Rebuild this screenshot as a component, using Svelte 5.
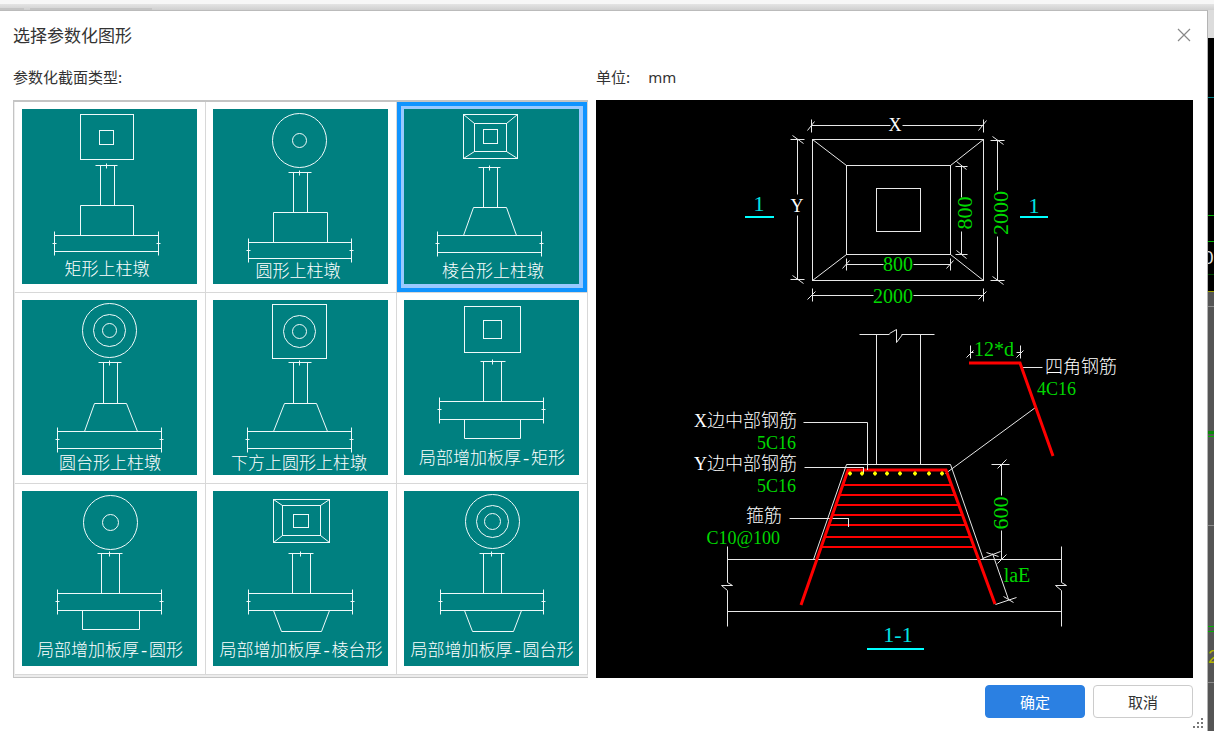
<script>
	// Every thumbnail shares the same parts: plan view on top, column, slab, and a pad above or below the slab
	const shapes = [
		{
			name: '矩形上柱墩',
			rects: [[58, 5, 53, 45], [77, 21, 14, 14]],
			column: { cap: [73, 95], sides: [78, 92], top: 56, bottom: 96 },
			pad: '58,126 58,96 111,96 111,126',
			slab: { left: 32, right: 136, top: 126, bottom: 142 },
			label: [85, 166]
		},
		{
			name: '圆形上柱墩',
			circles: [[86, 31, 27], [86, 31, 7]],
			column: { cap: [75, 98], sides: [80, 94], top: 63, bottom: 103 },
			pad: '60,133 60,103 114,103 114,133',
			slab: { left: 35, right: 138, top: 133, bottom: 149 },
			label: [85, 168]
		},
		{
			name: '棱台形上柱墩',
			rects: [[59, 5, 54, 44], [70, 14, 32, 28], [79, 20, 14, 14]],
			corners: true,
			column: { cap: [74, 96], sides: [79, 93], top: 58, bottom: 98 },
			pad: '59,126 69,98 102,98 112,126',
			slab: { left: 33, right: 137, top: 126, bottom: 143 },
			label: [89, 168]
		},
		{
			name: '圆台形上柱墩',
			circles: [[87, 30, 27], [87, 30, 16], [87, 30, 7]],
			column: { cap: [76, 99], sides: [81, 95], top: 62, bottom: 103 },
			pad: '62,131 72,103 104,103 115,131',
			slab: { left: 35, right: 139, top: 131, bottom: 148 },
			label: [88, 169]
		},
		{
			name: '下方上圆形上柱墩',
			rects: [[59, 4, 54, 54]],
			circles: [[86, 31, 16], [86, 31, 7]],
			column: { cap: [75, 98], sides: [80, 94], top: 62, bottom: 103 },
			pad: '60,131 71,103 103,103 114,131',
			slab: { left: 34, right: 138, top: 131, bottom: 148 },
			label: [86, 169]
		},
		{
			name: '局部增加板厚-矩形',
			rects: [[60, 6, 56, 46], [79, 20, 18, 18]],
			column: { cap: [76, 101], sides: [79, 97], top: 61, bottom: 101 },
			pad: '60,119 60,138 116,138 116,119',
			slab: { left: 35, right: 139, top: 101, bottom: 119 },
			label: [88, 164]
		},
		{
			name: '局部增加板厚-圆形',
			circles: [[88, 31, 27], [88, 31, 8]],
			column: { cap: [75, 100], sides: [79, 97], top: 62, bottom: 102 },
			pad: '60,119 60,138 117,138 117,119',
			slab: { left: 35, right: 139, top: 102, bottom: 119 },
			label: [88, 165]
		},
		{
			name: '局部增加板厚-棱台形',
			rects: [[60, 8, 56, 43], [69, 14, 38, 30], [80, 23, 15, 13]],
			corners: true,
			column: { cap: [75, 100], sides: [79, 97], top: 62, bottom: 102 },
			pad: '60,119 68,140 108,140 116,119',
			slab: { left: 35, right: 139, top: 102, bottom: 119 },
			label: [88, 165]
		},
		{
			name: '局部增加板厚-圆台形',
			circles: [[88, 30, 27], [88, 30, 16], [88, 30, 8]],
			column: { cap: [75, 100], sides: [79, 97], top: 62, bottom: 102 },
			pad: '60,119 68,140 109,140 117,119',
			slab: { left: 36, right: 139, top: 102, bottom: 119 },
			label: [88, 165]
		}
	];

	let selected = $state(2);

	const stirrups = [485, 495, 505, 515, 525, 537, 547];
	const dots = [850, 862, 875, 887, 900, 915, 929, 942];

	const barLeft = (y) => 848 - (y - 470) * 0.345;
	const barRight = (y) => 946 + (y - 470) * 0.367;

	function cornerPath([a, b]) {
		const [x, y, w, h] = a;
		const [u, v, p, q] = b;
		return `M${x} ${y}L${u} ${v}M${x + w} ${y}L${u + p} ${v}M${x} ${y + h}L${u} ${v + q}M${x + w} ${y + h}L${u + p} ${v + q}`;
	}
</script>

<svelte:head>
	<title>选择参数化图形</title>
</svelte:head>

<div class="page">
	<div class="toolbar"><span></span><span></span></div>

	<div class="workspace">
		<div class="dialog" role="dialog" aria-labelledby="dialog-title">
			<header>
				<h1 id="dialog-title">选择参数化图形</h1>
				<button class="close" aria-label="关闭">
					<svg width="14" height="14" viewBox="0 0 14 14"><path d="M1 1L13 13M13 1L1 13" /></svg>
				</button>
			</header>

			<div class="content">
				<section class="types">
					<h2>参数化截面类型:</h2>
					<ul class="list">
						{#each shapes as s, i}
							<li>
								<button
									class="thumb"
									class:selected={selected === i}
									aria-pressed={selected === i}
									onclick={() => (selected = i)}
								>
									<svg viewBox="0 0 175 175">
										<g class="lines" transform="translate(.5 .5)">
											{#each s.rects ?? [] as [x, y, w, h]}
												<rect {x} {y} width={w} height={h} />
											{/each}
											{#each s.circles ?? [] as [cx, cy, r]}
												<circle {cx} {cy} {r} />
											{/each}
											{#if s.corners}<path d={cornerPath(s.rects)} />{/if}
											<path
												d="M{s.column.cap[0]} {s.column.top}H{s.column.cap[1]}M{s.column
													.sides[0]} {s.column.top}V{s.column.bottom}M{s.column.sides[1]} {s
													.column.top}V{s.column.bottom}M{(s.column.cap[0] + s.column.cap[1]) >>
													1} {s.column.top - 2}v5"
											/>
											<polyline points={s.pad} />
											<path
												d="M{s.slab.left} {s.slab.top}H{s.slab.right}M{s.slab.left} {s.slab
													.bottom}H{s.slab.right}M{s.slab.left} {s.slab.top - 4}V{s.slab.bottom +
													4}M{s.slab.right} {s.slab.top - 4}V{s.slab.bottom + 4}M{s.slab.left -
													2} {s.slab.top + 8}h4M{s.slab.right - 2} {s.slab.top + 8}h4"
											/>
										</g>
										<text x={s.label[0]} y={s.label[1]}>{s.name}</text>
									</svg>
								</button>
							</li>
						{/each}
					</ul>
				</section>

				<section class="detail">
					<h2>单位:<span>mm</span></h2>
					<svg class="preview" viewBox="596 100 597 578">
						<!-- plan view -->
						<g class="lines" transform="translate(.5 .5)">
							<rect x="812" y="139" width="171" height="141" />
							<rect x="846" y="165" width="104" height="89" />
							<rect x="876" y="188" width="44" height="43" />
							<path d="M812 139L846 165M983 139L950 165M812 280L846 254M983 280L950 254" />
							<path d="M811 125H890M902 125H983M811 119V132M983 119V132" />
							<path d="M797 139V194M797 215V279M790 139H804M790 279H804" />
							<path d="M961 166V197M961 231V254M955 166H967M955 254H967" />
							<path d="M997 140V190M997 236V280M990 140H1004M990 280H1004" />
							<path d="M846 264H883M913 264H950M846 258V270M950 258V270" />
							<path d="M812 295H873M913 295H983M812 288V301M983 288V301" />
							<path
								d="M807 130L814 121M978 130L986 120M792 135L803 143M792 275L803 283M956 161L966 169M956 250L966 258M992 136L1003 144M992 276L1003 284M842 268L849 260M946 268L953 260M807 299L815 291M978 299L986 291"
							/>
						</g>
						<text class="mark" x="895" y="131">X</text>
						<text class="mark" x="797" y="212">Y</text>
						<text class="dim" x="898" y="271">800</text>
						<text class="dim" x="893" y="303">2000</text>
						<text class="dim tall" transform="translate(972 213) rotate(-90)">800</text>
						<text class="dim tall" transform="translate(1008 213) rotate(-90)">2000</text>
						<g class="section">
							<text x="759" y="211">1</text>
							<text x="1034" y="213">1</text>
							<text x="898" y="642">1-1</text>
							<path d="M745 217H774M1020 217H1048M867 649H924" />
						</g>

						<!-- section 1-1 -->
						<g class="lines" transform="translate(.5 .5)">
							<path d="M859 334H889M901 334H934M876 334V464M920 334V464M846 464H950" />
							<path d="M889 333L896 329V342L902 334" />
							<path d="M846 464L813 559M950 464L983 559" />
							<path
								d="M727 559H1061M727 611H1061M727 546V582M727 590V626M1061 546V582M1061 590V626"
							/>
							<path d="M727 582L732 585H721L727 590M1061 582L1066 585H1055L1061 590" />
							<path d="M803 422H867V469M804 467H863V473M789 518H848V526M1021 367H1042" />
							<path d="M1035 407L945 473" />
							<path
								d="M1001 464V495M1001 530V559M991 464H1009M970 345V358M1020 345V358M970 352H973M1016 352H1020"
							/>
							<path
								d="M997 468L1006 459M997 563L1006 554M966 357L973 350M1016 357L1023 350M982 558L1000 551M995 604L1016 597M992 553L1008 599M986 552L998 556M1003 596L1013 602"
							/>
						</g>
						<g class="rebar">
							<path d="M801 605L848 470H946L995 604M969 363H1020L1053 456" />
							{#each stirrups as y}
								<path class="flat" d="M{barLeft(y)} {y}H{barRight(y)}" />
							{/each}
						</g>
						<path class="lines" d="M867.5 464V470M863.5 467V474M848.5 518V527" />
						{#each dots as x}
							<path class="dot" d="M{x - 2} 473.5h4M{x} 471.5v4" />
						{/each}
						<text class="note end" x="797" y="427">X边中部钢筋</text>
						<text class="value end" x="796" y="449">5C16</text>
						<text class="note end" x="797" y="470">Y边中部钢筋</text>
						<text class="value end" x="796" y="492">5C16</text>
						<text class="note end" x="782" y="522">箍筋</text>
						<text class="value end" x="780" y="544">C10@100</text>
						<text class="dim" x="994" y="356">12*d</text>
						<text class="note" x="1045" y="373">四角钢筋</text>
						<text class="value" x="1037" y="395">4C16</text>
						<text class="dim tall" transform="translate(1008 513) rotate(-90)">600</text>
						<text class="dim" x="1017" y="582">laE</text>
					</svg>
				</section>
			</div>

			<footer>
				<button class="btn primary">确定</button>
				<button class="btn">取消</button>
				<svg class="grip" width="11" height="11" viewBox="0 0 11 11">
					<path d="M8 0h2v2h-2zM4 4h2v2h-2zM8 4h2v2h-2zM0 8h2v2h-2zM4 8h2v2h-2zM8 8h2v2h-2z" />
				</svg>
			</footer>
		</div>

		<!-- edge of the drawing area behind the dialog -->
		<svg class="canvas" width="6" height="721" viewBox="0 -1 6 721">
			<rect class="bar" y="-1" width="6" height="28" />
			<rect class="night" y="27" width="6" height="253" />
			<rect class="floor" y="280" width="6" height="440" />
			<path stroke="#007f86" d="M0 86.500h6" />
			<path stroke="#00b400" d="M0 204.500h6M0 230.500h6M0 615.500h6M0 620.500h6M0 425.500h6" />
			<path stroke="#0a8a0a" stroke-width="3" d="M0 421.500h6" />
			<path stroke="#004800" d="M0 263.500h6" />
			<path stroke="#a0a000" d="M0 280.500h6" />
			<path stroke="#8c8c8c" d="M0 295.500h6M0 514.500h6M0 671.500h6" />
			<text x="-5" y="253" fill="#ddd">0</text>
			<text x="0" y="652" fill="#b4b400">2</text>
		</svg>
	</div>
</div>

<style>
	:global(body) {
		background: #d6d6d6;
	}

	.page {
		min-height: 100vh;
		display: flex;
		flex-direction: column;
		font-family: 'Noto Sans CJK SC', sans-serif;
		color: #333;
		overflow: hidden;
	}

	.toolbar {
		height: 10px;
		box-sizing: border-box;
		border-top: 4px solid #f7f7f7;
		background: linear-gradient(#e4e4e4, #cfcfcf);
		display: flex;
		align-items: flex-end;
		gap: 6px;
	}

	.toolbar span {
		width: 24px;
		height: 2px;
		background: #c4c4c4;
	}

	.toolbar span + span {
		width: 122px;
	}

	.workspace {
		flex: 1;
		display: grid;
		grid-template-columns: 1fr 6px;
	}

	.dialog {
		background: #fff;
		border-top: 1px solid #bbb;
		border-right: 1px solid #b4b4b4;
		display: flex;
		flex-direction: column;
	}

	header {
		height: 48px;
		padding: 0 16px 0 13px;
		display: flex;
		align-items: center;
		justify-content: space-between;
	}

	h1 {
		margin: 0;
		font-size: 17px;
		line-height: 24px;
		font-weight: 400;
	}

	button {
		font-family: inherit;
		cursor: pointer;
	}

	.close {
		border: 0;
		background: none;
		padding: 0;
		display: flex;
	}

	.close path {
		stroke: #888;
		stroke-width: 1.2;
		fill: none;
	}

	.content {
		display: grid;
		grid-template-columns: 575px 1fr;
		gap: 8px;
		padding: 0 14px 0 13px;
	}

	h2 {
		margin: 0;
		height: 41px;
		font-size: 15px;
		line-height: 36px;
		font-weight: 400;
	}

	h2 span {
		margin-left: 18px;
		font-family: 'Noto Sans', sans-serif;
		font-size: 15px;
	}

	.list {
		list-style: none;
		margin: 0;
		padding: 0 0 2px 1px;
		display: grid;
		grid-template-columns: repeat(3, 191px);
		border: 1px solid #c4c4c4;
		border-top-width: 2px;
		border-right: 0;
		background: #ececec;
	}

	.list li {
		background: #fff;
		border-right: 1px solid #d8d8d8;
		border-bottom: 1px solid #d8d8d8;
	}

	.thumb {
		display: block;
		width: 190px;
		height: 190px;
		box-sizing: border-box;
		border: 4px solid #fff;
		padding: 3px 4px 4px 3px;
		background: #fff;
		border-radius: 0;
	}

	.thumb.selected {
		border-color: #1094ff;
		background: #99c9ff;
	}

	.thumb svg {
		display: block;
		width: 175px;
		height: 175px;
		background: #008080;
	}

	.thumb text {
		font-family: 'Liberation Mono', 'Noto Sans CJK SC', sans-serif;
		font-size: 17px;
		font-weight: 300;
		fill: #fff;
		text-anchor: middle;
	}

	.lines {
		fill: none;
		stroke: #f0fafa;
		stroke-width: 1;
	}

	.preview {
		display: block;
		width: 100%;
		height: 578px;
		background: #000;
		font-family: 'Liberation Serif', 'Noto Sans CJK SC', serif;
		font-weight: 300;
	}

	.preview .lines {
		stroke: #e8e8e8;
	}

	.mark,
	.note {
		fill: #fff;
		font-size: 18px;
	}

	.mark,
	.dim {
		text-anchor: middle;
	}

	.dim,
	.value {
		fill: #00d800;
		font-size: 20px;
	}

	.value {
		font-size: 18px;
	}

	.tall {
		font-size: 22px;
	}

	.end {
		text-anchor: end;
	}

	.section {
		fill: #00e5e5;
		font-size: 22px;
		text-anchor: middle;
	}

	.section path {
		stroke: #0ff;
		stroke-width: 2;
	}

	.rebar path {
		fill: none;
		stroke: #f00;
		stroke-width: 3;
	}

	.rebar .flat {
		stroke-width: 2;
	}

	.dot {
		stroke: #ff0;
		stroke-width: 2;
	}

	footer {
		display: flex;
		gap: 8px;
		justify-content: flex-end;
		padding: 7px 14px 0 13px;
		position: relative;
		flex: 1;
	}

	.btn {
		width: 100px;
		height: 33px;
		border: 1px solid #ccc;
		border-radius: 4px;
		background: #fff;
		color: #333;
		font-size: 15px;
		padding: 0;
	}

	.primary {
		border-color: #2b80e2;
		background: #2b80e2;
		color: #fff;
	}

	.grip {
		position: absolute;
		right: 3px;
		bottom: 2px;
		fill: #777;
	}

	.canvas {
		display: block;
	}

	.canvas text {
		font-family: 'Liberation Sans', sans-serif;
		font-size: 19px;
	}

	.bar {
		fill: #dcdcdc;
	}

	.night {
		fill: #000;
	}

	.floor {
		fill: #555;
	}
</style>
